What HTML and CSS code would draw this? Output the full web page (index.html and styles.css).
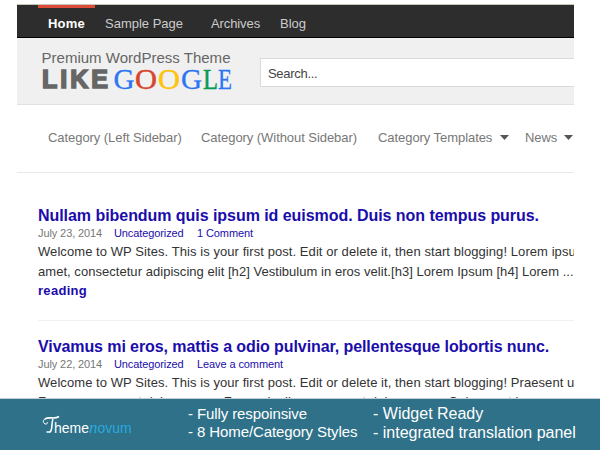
FILE: index.html
```html
<!DOCTYPE html>
<html lang="en">
<head>
<meta charset="utf-8">
<title>Like Google</title>
<link rel="stylesheet" href="styles.css">
</head>
<body>
<div class="site">
  <nav class="topnav">
    <a class="tab active">Home</a>
    <a class="sample">Sample Page</a>
    <a class="archives">Archives</a>
    <a class="blog">Blog</a>
  </nav>
  <header class="header">
    <svg class="logo" width="200" height="50" viewBox="38 48 200 50" aria-label="Like Google">
      <text class="tagline" x="41.5" y="63" textLength="189" lengthAdjust="spacingAndGlyphs">Premium WordPress Theme</text>
      <text class="like" x="42" y="87.500" textLength="66" lengthAdjust="spacing">LIKE</text>
      <g class="google">
        <text class="blue" x="113.500" y="88.500" textLength="21" lengthAdjust="spacingAndGlyphs">G</text>
        <text class="red" x="135" y="88.500" textLength="22" lengthAdjust="spacingAndGlyphs">O</text>
        <text class="yellow" x="158" y="88.500" textLength="22" lengthAdjust="spacingAndGlyphs">O</text>
        <text class="blue" x="181" y="88.500" textLength="21" lengthAdjust="spacingAndGlyphs">G</text>
        <text class="green" x="203" y="88.500" textLength="15" lengthAdjust="spacingAndGlyphs">L</text>
        <text class="blue" x="218" y="88.500" textLength="14" lengthAdjust="spacingAndGlyphs">E</text>
      </g>
    </svg>
    <div class="search">Search...</div>
  </header>
  <nav class="categories">
    <a class="c1">Category (Left Sidebar)</a>
    <a class="c2">Category (Without Sidebar)</a>
    <a class="c3">Category Templates</a><i class="caret"></i>
    <a class="c4">News</a><i class="caret"></i>
  </nav>
  <main class="posts">
    <article class="post">
      <h2>Nullam bibendum quis ipsum id euismod. Duis non tempus purus.</h2>
      <div class="meta"><span>July 23, 2014</span><a class="cat">Uncategorized</a><a>1 Comment</a></div>
      <div class="body">
        <p>Welcome to WP Sites. This is your first post. Edit or delete it, then start blogging! Lorem ipsum dolor sit</p>
        <p class="second">amet, consectetur adipiscing elit [h2] Vestibulum in eros velit.[h3] Lorem Ipsum [h4] Lorem ...</p>
        <p class="more">reading</p>
      </div>
    </article>
    <article class="post">
      <h2 class="long">Vivamus mi eros, mattis a odio pulvinar, pellentesque lobortis nunc.</h2>
      <div class="meta"><span>July 22, 2014</span><a class="cat">Uncategorized</a><a>Leave a comment</a></div>
      <div class="body">
        <p>Welcome to WP Sites. This is your first post. Edit or delete it, then start blogging! Praesent ut</p>
        <p class="last">Fusce a massa et dolor ornare. Fusce dapibus massa ut dolor ornare. Quisque at lacus</p>
      </div>
    </article>
  </main>
</div>
<footer class="banner">
  <svg class="brand" width="100" height="40" viewBox="38 405 100 40" aria-label="Themenovum">
    <path class="thin" d="M48 417.500C43 417 42 421 45 423C47 423.500 48 422 47 421"/>
    <path class="thick" d="M45 418C49 415 54 419 59 415.500M53 418C51 422 53 429 50 431H46.500"/>
    <text class="theme" x="54" y="432" textLength="35" lengthAdjust="spacingAndGlyphs">heme</text>
    <text class="n" x="89" y="432">n</text>
    <text class="novum" x="97.500" y="432" textLength="34" lengthAdjust="spacingAndGlyphs">ovum</text>
  </svg>
  <div class="features f1"><span>- Fully respoinsive</span><span>- 8 Home/Category Styles</span></div>
  <div class="features f2"><span>- Widget Ready</span><span>- integrated translation panel</span></div>
</footer>
</body>
</html>
```

FILE: styles.css
```css
* { box-sizing: border-box; }
body { margin: 0; width: 600px; height: 450px; overflow: hidden; background: #fff; font-family: "Liberation Sans", Arial, sans-serif; font-size: 13px; color: #333; white-space: nowrap; }
.site { width: 557px; height: 398px; margin-left: 17px; padding-top: 4px; overflow: hidden; }
.topnav { display: flex; height: 34px; padding-left: 21px; background: #2d2d2d; border-top: 1px solid #c8c5bd; border-bottom: 1px solid #000; color: #ccc; line-height: 37px; }
.tab { width: 57px; height: 32px; padding-left: 10px; border-top: 3px solid #dd4b39; color: #fff; font-weight: bold; line-height: 31px; letter-spacing: .2px; }
.sample { width: 106px; padding-left: 10px; }
.archives { width: 69px; padding-left: 10px; letter-spacing: -.1px; }
.blog { padding-left: 10px; }
.header { display: flex; height: 67px; background: #f0f0f0; border-bottom: 1px solid #e2e2e2; }
.logo { margin: 10px 22px 0 21px; flex: none; }
.tagline { font-size: 14px; fill: #666; }
.like { font: bold 25px "Liberation Sans", Arial, sans-serif; fill: #666; stroke: #666; stroke-width: 1.600px; }
.google { font: 29.500px "Liberation Serif", serif; }
.blue { fill: #2a75f3; stroke: #2a75f3; stroke-width: .3px; }
.red { fill: #d6452f; stroke: #d6452f; stroke-width: .5px; }
.yellow { fill: #fdc40c; stroke: #fdc40c; stroke-width: .5px; }
.green { fill: #0a9b57; stroke: #0a9b57; stroke-width: .5px; }
.search { flex: none; width: 330px; height: 29px; margin-top: 20px; padding-left: 7px; border: 1px solid #dadada; background: #fff; color: #444; line-height: 29px; letter-spacing: -.3px; }
.categories { display: flex; height: 68px; padding-left: 31px; border-bottom: 1px solid #e8e8e8; color: #777; line-height: 65px; letter-spacing: -.06px; }
.c1 { width: 153px; }
.c2 { width: 177px; }
.c3 { width: 122px; }
.c4 { width: 39px; margin-left: 16px; }
.caret { width: 9px; height: 5px; margin-top: 30px; background: #555; clip-path: polygon(0 0, 100% 0, 50% 100%); }
.posts { padding: 33px 0 0 21px; }
.post { height: 115px; border-bottom: 1px solid #f0f0f0; margin-bottom: 16px; }
h2 { margin: 0; font-size: 16px; line-height: 20px; letter-spacing: -.05px; color: #1a0dab; }
h2.long { letter-spacing: -.09px; }
.meta { display: flex; font-size: 11px; line-height: 15px; letter-spacing: -.1px; color: #777; }
.meta span { width: 76px; }
.cat { width: 83px; }
.meta a, .body .more { color: #1a0dab; }
.body { padding-top: 1px; line-height: 20px; }
.body p { margin: 0; letter-spacing: .07px; }
.body .second { letter-spacing: .04px; }
.body .last { line-height: 18px; }
.body .more { font-weight: bold; line-height: 17px; letter-spacing: .3px; }
.banner { display: flex; height: 52px; background: #2e7189; border-top: 1px solid #c4ced2; color: #fff; }
.brand { margin: 7px 50px 0 38px; flex: none; }
.thin { fill: none; stroke: #fff; stroke-width: 1; }
.thick { fill: none; stroke: #fff; stroke-width: 1.600; }
.theme { font-size: 15px; fill: #fff; }
.n { font: italic 17px "Liberation Serif", serif; fill: #29a9df; }
.novum { font-size: 15px; fill: #29a9df; }
.features { display: flex; flex-direction: column; padding-top: 5px; font-size: 16px; line-height: 19px; }
.f1 { width: 185px; flex: none; padding-top: 6px; font-size: 15px; line-height: 18px; letter-spacing: -.1px; }
```
